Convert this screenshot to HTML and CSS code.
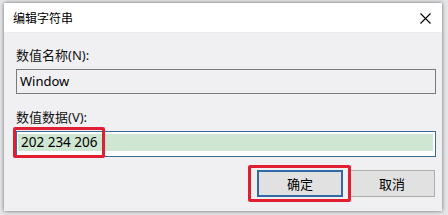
FILE: index.html
```html
<!DOCTYPE html>
<html lang="zh-CN">
<head>
    <meta charset="UTF-8">
    <title>编辑字符串</title>
    <link rel="stylesheet" href="styles.css">
</head>
<body>
    <div class="dialog">
        <div class="titlebar">
            <span class="title">编辑字符串</span>
            <span class="close">
                <svg width="11" height="11" viewBox="0 0 11 11">
                    <path d="M0.5 0.5 L10.5 10.5 M10.5 0.5 L0.5 10.5" stroke="#000" stroke-width="1.1" fill="none"/>
                </svg>
            </span>
        </div>
        <div class="content">
            <div class="label">数值名称(N):</div>
            <div class="field name-field">Window</div>
            <div class="label">数值数据(V):</div>
            <div class="field data-field">
                <div class="selected">202 234 206</div>
                <div class="mark mark-data"></div>
            </div>
            <div class="buttons">
                <div class="btn-wrap">
                    <button class="btn default">确定</button>
                    <div class="mark mark-ok"></div>
                </div>
                <button class="btn">取消</button>
            </div>
        </div>
    </div>
</body>
</html>
```

FILE: styles.css
```css
body {
    margin: 0;
    width: 448px;
    height: 215px;
    background-color: #e6e6e8;
    font-family: 'Noto Sans', 'Noto Sans CJK SC', sans-serif;
    overflow: hidden;
}
.dialog {
    margin: 3px 0 0 4px;
    width: 438px;
    height: 208px;
    background-color: #f0f0f2;
    box-shadow: 0 0 4px rgba(0, 0, 0, 0.55);
}
.titlebar {
    height: 29px;
    background-color: #ffffff;
    display: flex;
    align-items: center;
    justify-content: space-between;
    padding: 0 6px 0 9px;
    border-bottom: 1px solid #ececec;
}
.title {
    font-size: 12px;
    color: #000;
    padding-top: 1px;
}
.close {
    display: flex;
    width: 11px;
    height: 11px;
    margin-right: 5px;
    margin-top: 1px;
}
.content {
    padding: 14px 6px 0 12px;
}
.label {
    font-size: 13px;
    line-height: 16px;
    color: #111;
    height: 16px;
    margin-bottom: 6px;
}
.field {
    box-sizing: border-box;
    width: 420px;
    font-size: 13px;
    color: #000;
}
.name-field {
    height: 25px;
    border: 1px solid #7a7a7a;
    background-color: #f0f0f2;
    padding: 3px 0 0 3px;
    line-height: 17px;
    margin-bottom: 15px;
}
.data-field {
    position: relative;
    height: 26px;
    border: 1px solid #3b6a94;
    background-color: #ffffff;
    padding: 2px 2px 0 1px;
    margin-bottom: 13px;
}
.selected {
    height: 17px;
    line-height: 17px;
    background-color: #cfe6d2;
    padding-left: 3px;
    font-size: 13.5px;
}
.buttons {
    display: flex;
    justify-content: flex-end;
    gap: 6px;
    width: 419px;
}
.btn-wrap {
    position: relative;
    display: flex;
}
.btn {
    width: 86px;
    height: 27px;
    background-color: #e1e1e1;
    border: 1px solid #adadad;
    font-family: 'Noto Sans CJK SC', sans-serif;
    font-size: 13px;
    color: #000;
    padding: 0;
}
.btn.default {
    border: 2px solid #2f6aa6;
}
.mark {
    position: absolute;
    border: 3px solid #e21f32;
    border-radius: 2px;
    box-sizing: border-box;
}
.mark-data {
    left: -4px;
    top: -5px;
    width: 92px;
    height: 31px;
}
.mark-ok {
    left: -9px;
    top: -5px;
    width: 103px;
    height: 37px;
}
```
